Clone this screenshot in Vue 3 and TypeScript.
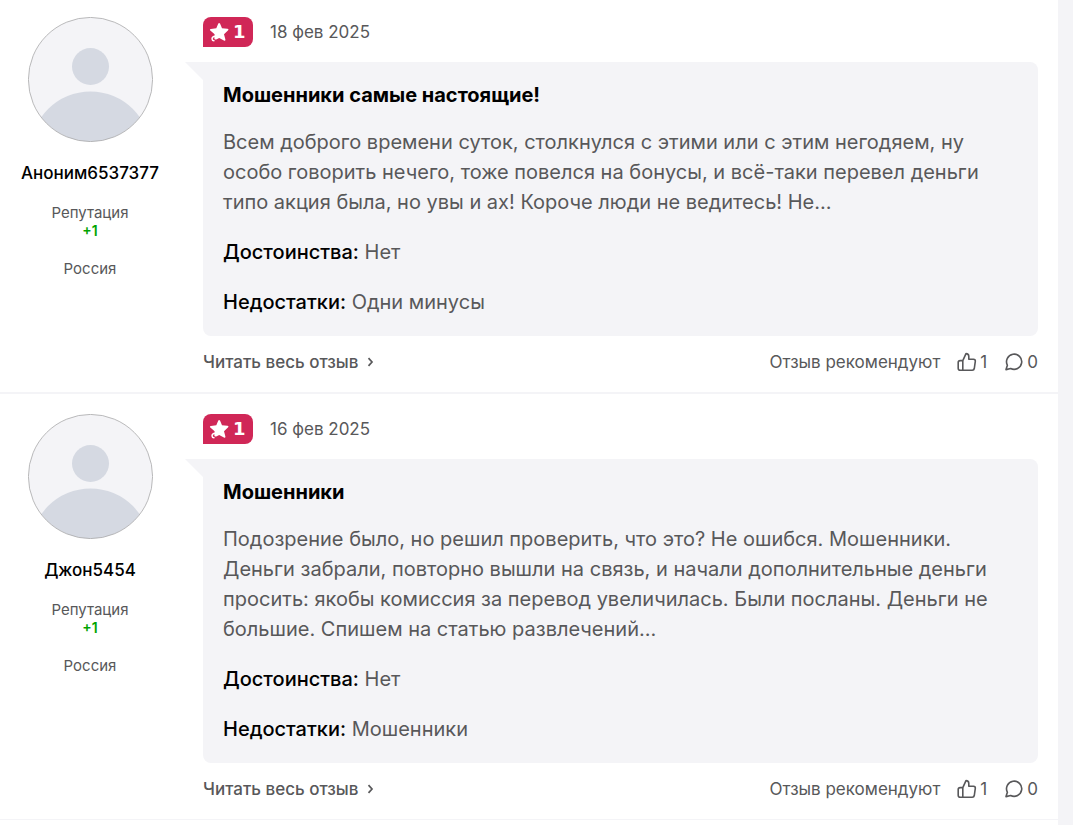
<script setup lang="ts">
interface Review {
  id: number
  author: string
  reputation: string
  country: string
  rating: number
  date: string
  title: string
  text: string[]
  pros: string
  cons: string
  likes: number
  comments: number
}

const reviews: Review[] = [
  {
    id: 1,
    author: 'Аноним6537377',
    reputation: '+1',
    country: 'Россия',
    rating: 1,
    date: '18 фев 2025',
    title: 'Мошенники самые настоящие!',
    text: [
      'Всем доброго времени суток, столкнулся с этими или с этим негодяем, ну',
      'особо говорить нечего, тоже повелся на бонусы, и всё-таки перевел деньги',
      'типо акция была, но увы и ах! Короче люди не ведитесь! Не...',
    ],
    pros: 'Нет',
    cons: 'Одни минусы',
    likes: 1,
    comments: 0,
  },
  {
    id: 2,
    author: 'Джон5454',
    reputation: '+1',
    country: 'Россия',
    rating: 1,
    date: '16 фев 2025',
    title: 'Мошенники',
    text: [
      'Подозрение было, но решил проверить, что это? Не ошибся. Мошенники.',
      'Деньги забрали, повторно вышли на связь, и начали дополнительные деньги',
      'просить: якобы комиссия за перевод увеличилась. Были посланы. Деньги не',
      'большие. Спишем на статью развлечений...',
    ],
    pros: 'Нет',
    cons: 'Мошенники',
    likes: 1,
    comments: 0,
  },
]
</script>

<template>
  <main class="page">
    <article v-for="review in reviews" :key="review.id" class="review">
      <aside class="author">
        <svg class="avatar" viewBox="0 0 125 125" aria-hidden="true">
          <defs>
            <clipPath :id="`avatar-${review.id}`"><circle cx="62.5" cy="62.5" r="62" /></clipPath>
          </defs>
          <circle cx="62.5" cy="62.5" r="62" fill="#f4f4f7" />
          <g :clip-path="`url(#avatar-${review.id})`" fill="#d5d9e2">
            <circle cx="62.5" cy="49.5" r="18.5" />
            <circle cx="62.5" cy="134.5" r="60" />
          </g>
          <circle cx="62.5" cy="62.5" r="62.1" fill="none" stroke="#a8a8aa" stroke-width=".8" />
        </svg>
        <a class="name" href="#">{{ review.author }}</a>
        <div class="meta">Репутация</div>
        <div class="reputation">{{ review.reputation }}</div>
        <div class="meta country">{{ review.country }}</div>
      </aside>

      <section class="content">
        <header class="head">
          <span class="rating">
            <svg width="20" height="20" viewBox="0 0 20 20" aria-hidden="true">
              <path
                d="M9.3 1.6Q10.1.2 11 1.6L13 6.3 18.4 6.8Q20.2 7.2 18.9 8.6L15 12.3 16.4 17.4Q16.6 19.3 14.9 18.6L10.2 15.9 7.2 17.5Q5.2 18 5.4 16.2L5.6 12.3 1.3 8.6Q.3 7.2 1.9 6.9L7.3 6.3Z"
                fill="#fff"
              />
              <path
                d="M6.4 14.2Q3 14.5 3 16.9 3.2 18.8 5 18.8"
                fill="none"
                stroke="#fff"
                stroke-width="1.4"
                stroke-linecap="round"
              />
            </svg>
            <span class="score">{{ review.rating }}</span>
          </span>
          <time class="date">{{ review.date }}</time>
        </header>

        <div class="bubble">
          <h2 class="title">{{ review.title }}</h2>
          <p class="text">
            <template v-for="(line, i) in review.text" :key="i"><br v-if="i > 0" />{{ line }}</template>
          </p>
          <p class="point"><b>Достоинства:</b> {{ review.pros }}</p>
          <p class="point"><b>Недостатки:</b> {{ review.cons }}</p>
        </div>

        <footer class="foot">
          <a class="more" href="#">
            Читать весь отзыв
            <svg width="7" height="10" viewBox="0 0 7 10" aria-hidden="true">
              <path d="M1.5 1.2 5 5 1.5 8.8" fill="none" stroke="currentColor" stroke-width="1.7" />
            </svg>
          </a>
          <span class="recommend">Отзыв рекомендуют</span>
          <button class="action" type="button" aria-label="Рекомендую">
            <svg width="20" height="20" viewBox="0 0 20 20" aria-hidden="true">
              <path
                d="M5.8 8.6 9 1.6Q11.8 1.6 11.8 4.5V7.3H16.5Q18.6 7.4 18.3 9.4L17.3 16.5Q17 18.2 15.3 18.2H3.2Q1.2 18.2 1.2 16.2V10.6Q1.2 8.6 3.2 8.6ZM5.8 8.6V18.2"
                fill="none"
                stroke="currentColor"
                stroke-width="1.6"
                stroke-linejoin="round"
              />
            </svg>
            {{ review.likes }}
          </button>
          <button class="action" type="button" aria-label="Комментарии">
            <svg width="20" height="20" viewBox="0 0 20 20" aria-hidden="true">
              <path
                d="M2 17.6 3.4 13.3A7.6 7.6 0 1 1 6.6 16.5Z"
                fill="none"
                stroke="currentColor"
                stroke-width="1.6"
                stroke-linejoin="round"
              />
            </svg>
            {{ review.comments }}
          </button>
        </footer>
      </section>
    </article>
  </main>
</template>

<style>
body {
  margin: 0;
  background: #f4f4f7;
}
</style>

<style scoped>
.page {
  margin-right: 15px;
  padding-bottom: 5px;
  background: #fff;
  color: #58585a;
  font-family: Inter, 'Noto Sans', sans-serif;
  font-size: 17px;
}
.review {
  display: flex;
  padding: 20px 20px 17px 0;
  border-bottom: 2px solid #f4f4f7;
}
.review:first-child {
  padding-top: 17px;
}
.review:last-child {
  border-bottom-width: 1px;
}
.author {
  display: flex;
  flex: 0 0 180px;
  flex-direction: column;
  align-items: center;
  margin-right: 23px;
  font-size: 15px;
  line-height: 18px;
}
.avatar {
  width: 125px;
  height: 125px;
}
.name {
  margin: 19px 0;
  color: #000;
  font-size: 17px;
  font-weight: 500;
  line-height: 24px;
  text-decoration: none;
}
.reputation {
  color: #00a400;
  font-size: 14px;
  font-weight: 600;
}
.country {
  margin-top: 20px;
}
.content {
  flex: 1;
  min-width: 0;
}
.head {
  display: flex;
  align-items: center;
  gap: 17px;
  margin-bottom: 15px;
}
.rating {
  display: flex;
  box-sizing: border-box;
  width: 50px;
  height: 30px;
  align-items: center;
  gap: 4px;
  padding-left: 6px;
  border-radius: 8px 8px 8px 0;
  background: #d02757;
  color: #fff;
}
.score {
  font-family: 'DejaVu Sans', sans-serif;
  font-size: 18px;
  font-weight: 700;
  line-height: 30px;
}
.bubble {
  position: relative;
  padding: 18px 20px 19px;
  border-radius: 0 8px 8px 8px;
  background: #f4f4f7;
  font-size: 20px;
  line-height: 30px;
}
.bubble::before {
  position: absolute;
  top: 0;
  right: 100%;
  width: 18px;
  height: 18px;
  background: #f4f4f7;
  clip-path: polygon(0 0, 100% 0, 100% 100%);
  content: '';
}
.title {
  margin: 0;
  color: #000;
  font-size: 20px;
  font-weight: 700;
}
.text {
  margin: 17px 0 0;
}
.point {
  margin: 20px 0 0;
}
.point b {
  color: #000;
  font-weight: 500;
}
.foot {
  display: flex;
  align-items: center;
  padding-top: 13px;
  line-height: 26px;
}
.more {
  display: flex;
  align-items: center;
  gap: 9px;
  margin-right: auto;
  color: inherit;
  font-weight: 500;
  text-decoration: none;
}
.action {
  display: flex;
  align-items: center;
  gap: 3px;
  margin: 0 0 0 17px;
  padding: 0;
  border: 0;
  background: none;
  color: inherit;
  font: inherit;
}
</style>
